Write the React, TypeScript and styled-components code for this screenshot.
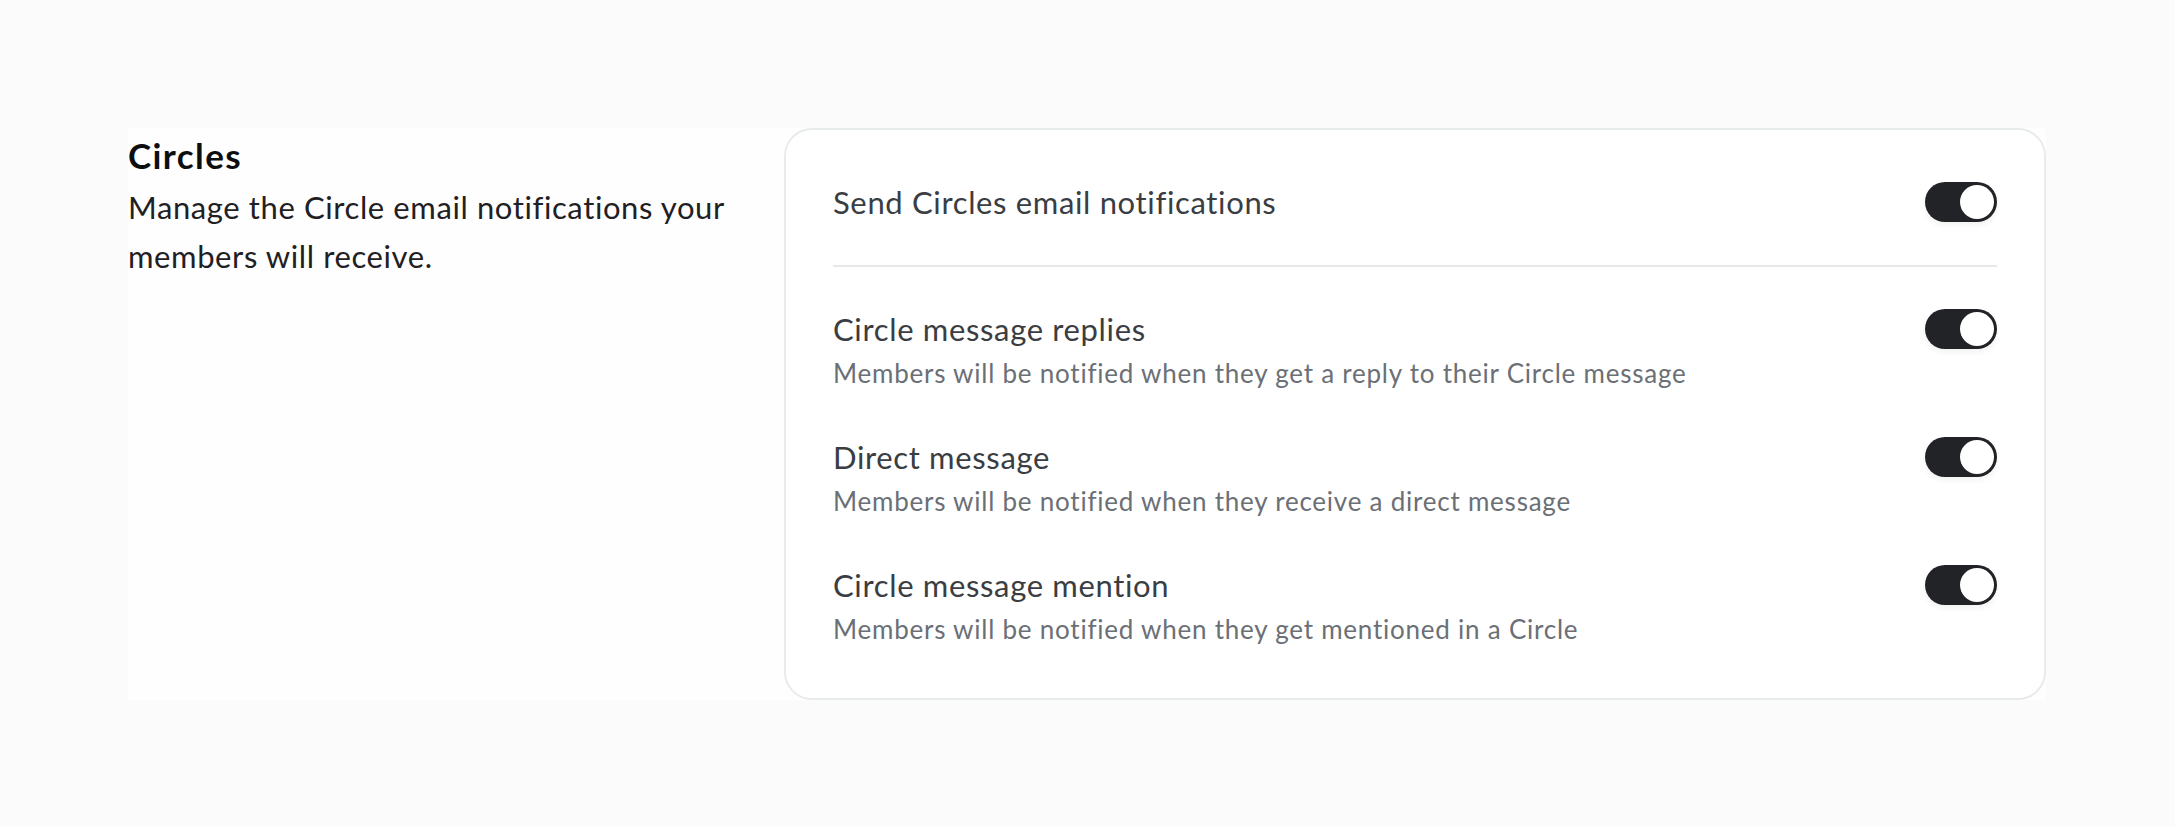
import * as React from 'react'
import styled, { createGlobalStyle } from 'styled-components'

const GlobalStyle = createGlobalStyle`
	html, body {
		margin: 0;
		padding: 0;
		background: #fbfbfb;
		font-family: Lato, 'Open Sans', sans-serif;
	}
`

const Page = styled.div`
	padding: 128px 129px 0 128px;
`

const Section = styled.section`
	display: grid;
	grid-template-columns: 608px 1fr;
	column-gap: 48px;
	background: #fefefe;
	align-items: start;
`

const Intro = styled.div`
	display: flex;
	flex-direction: column;
`

const Heading = styled.h2`
	margin: 0;
	font-size: 35px;
	line-height: 55px;
	font-weight: 700;
	letter-spacing: 1.4px;
	color: #0d0e10;
`

const Lead = styled.p`
	margin: 0;
	font-size: 31px;
	line-height: 49px;
	letter-spacing: 0.6px;
	color: #1e2023;
`

const Card = styled.div`
	background: #ffffff;
	border: 2px solid #e8ebeb;
	border-radius: 28px;
	padding: 50px 47px 47px 47px;
	display: flex;
	flex-direction: column;
`

const Row = styled.div`
	display: flex;
	justify-content: space-between;
	align-items: flex-start;
	gap: 24px;
`

const Divider = styled.hr`
	border: none;
	height: 2px;
	background: #e7e8e9;
	margin: 41px 0 40px 0;
`

const List = styled.div`
	display: flex;
	flex-direction: column;
	gap: 40px;
`

const Text = styled.div`
	display: flex;
	flex-direction: column;
`

const Title = styled.div`
	font-size: 31px;
	line-height: 44px;
	letter-spacing: 0.65px;
	color: #3a3d42;
`

const Desc = styled.div`
	font-size: 26px;
	line-height: 44px;
	letter-spacing: 0.77px;
	color: #6b6f76;
`

const Track = styled.button<{ on: boolean }>`
	flex: none;
	margin-top: 2px;
	width: 72px;
	height: 40px;
	border: none;
	border-radius: 20px;
	padding: 0 3px;
	display: flex;
	align-items: center;
	justify-content: ${p => (p.on ? 'flex-end' : 'flex-start')};
	background: ${p => (p.on ? '#212327' : '#d5d7da')};
	box-shadow: 0 3px 6px rgba(0, 0, 0, 0.06);
	cursor: pointer;
`

const Knob = styled.span`
	width: 34px;
	height: 34px;
	border-radius: 50%;
	background: #ffffff;
`

type ToggleProps = {
	on: boolean
	onClick: () => void
}
const Toggle: React.FC<ToggleProps> = ({ on, onClick }) => (
	<Track on={on} onClick={onClick} aria-pressed={on}>
		<Knob />
	</Track>
)

const items = [
	{
		key: 'replies',
		title: 'Circle message replies',
		desc: 'Members will be notified when they get a reply to their Circle message',
	},
	{
		key: 'direct',
		title: 'Direct message',
		desc: 'Members will be notified when they receive a direct message',
	},
	{
		key: 'mention',
		title: 'Circle message mention',
		desc: 'Members will be notified when they get mentioned in a Circle',
	},
]

const App: React.FC = () => {
	const [state, setState] = React.useState<{ [k: string]: boolean }>({
		all: true,
		replies: true,
		direct: true,
		mention: true,
	})

	const flip = (k: string) => setState(s => ({ ...s, [k]: !s[k] }))

	return (
		<Page>
			<GlobalStyle />
			<Section>
				<Intro>
					<Heading>Circles</Heading>
					<Lead>Manage the Circle email notifications your members will receive.</Lead>
				</Intro>
				<Card>
					<Row>
						<Title>Send Circles email notifications</Title>
						<Toggle on={state.all} onClick={() => flip('all')} />
					</Row>
					<Divider />
					<List>
						{items.map(item => (
							<Row key={item.key}>
								<Text>
									<Title>{item.title}</Title>
									<Desc>{item.desc}</Desc>
								</Text>
								<Toggle on={state[item.key]} onClick={() => flip(item.key)} />
							</Row>
						))}
					</List>
				</Card>
			</Section>
		</Page>
	)
}

export default App
